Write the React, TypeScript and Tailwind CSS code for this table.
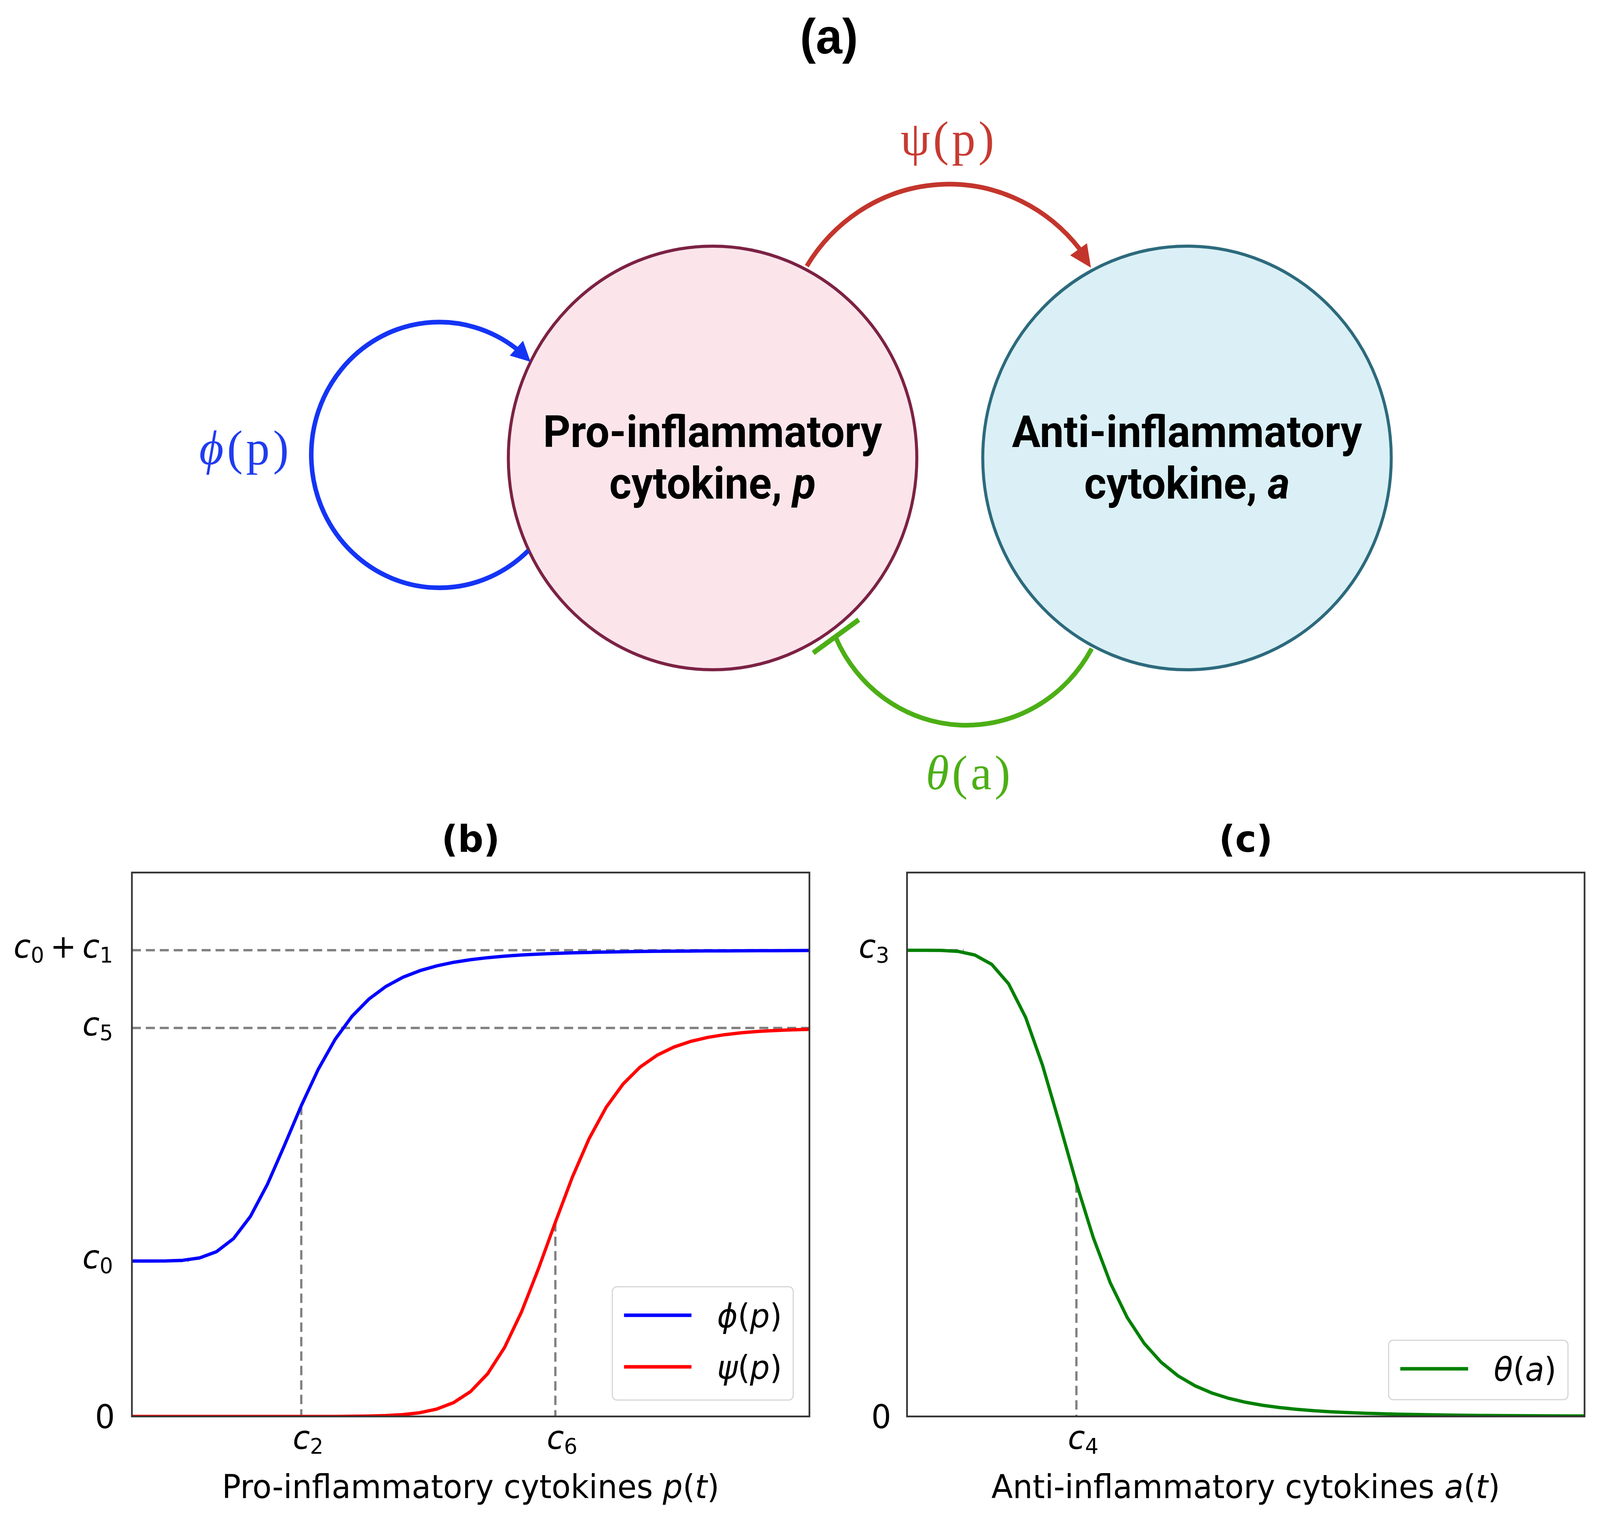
import React, { useEffect, useState } from "react";

const W = 1798;
const H = 1392;
const TOP = 38;
const BOT = TOP + H;
const yv = (v: number) => BOT - (v * H) / 3.5;
const xv = (x0: number, p: number) => x0 + (p * W) / 8;

const phi = (p: number) => 1 + (2 * Math.pow(p, 5)) / (32 + Math.pow(p, 5));
const psi = (p: number) => (2.5 * Math.pow(p, 12)) / (Math.pow(5, 12) + Math.pow(p, 12));
const theta = (a: number) => (3 * 32) / (32 + Math.pow(a, 5));

const pts = (f: (x: number) => number, x0: number) =>
  Array.from({ length: 41 }, (_, i) => {
    const p = i * 0.2;
    return `${xv(x0, p).toFixed(1)},${yv(f(p)).toFixed(1)}`;
  }).join(" ");

const DASH = "24 13";
const GRAY = "#808080";
const FS = 83;

function Sub({ c, n }: { c: string; n: string }) {
  return (
    <>
      <tspan fontStyle="italic">{c}</tspan>
      <tspan fontSize={56} dy={12}>
        {n}
      </tspan>
    </>
  );
}

function LeftChart() {
  const x0 = 350;
  const x1 = x0 + W;
  return (
    <svg width={2200} height={1569} className="block">
      <defs>
        <clipPath id="clipL">
          <rect x={x0} y={TOP} width={W} height={H} />
        </clipPath>
      </defs>
      <g clipPath="url(#clipL)">
        <line x1={x0} x2={x1} y1={yv(3)} y2={yv(3)} stroke={GRAY} strokeWidth={6} strokeDasharray={DASH} />
        <line x1={x0} x2={x1} y1={yv(2.5)} y2={yv(2.5)} stroke={GRAY} strokeWidth={6} strokeDasharray={DASH} />
        <line x1={x0} x2={x0 + 150} y1={yv(1)} y2={yv(1)} stroke={GRAY} strokeWidth={6} strokeDasharray={DASH} />
        <line x1={xv(x0, 2)} x2={xv(x0, 2)} y1={yv(2)} y2={BOT} stroke={GRAY} strokeWidth={6} strokeDasharray={DASH} />
        <line x1={xv(x0, 5)} x2={xv(x0, 5)} y1={yv(1.25)} y2={BOT} stroke={GRAY} strokeWidth={6} strokeDasharray={DASH} />
        <polyline points={pts(phi, x0)} fill="none" stroke="#0000ff" strokeWidth={8.5} strokeLinejoin="round" />
        <polyline points={pts(psi, x0)} fill="none" stroke="#ff0000" strokeWidth={8.5} strokeLinejoin="round" />
      </g>
      <rect x={x0} y={TOP} width={W} height={H} fill="none" stroke="#333333" strokeWidth={4.5} />

      <g fontFamily="DejaVu Sans, sans-serif" fontSize={FS} fill="#000">
        <text x={300} y={yv(3) + 19} textAnchor="end">
          <Sub c="c" n="0" />
          <tspan dx={16} dy={-12}>+</tspan>
          <tspan dx={16} fontStyle="italic">c</tspan>
          <tspan fontSize={56} dy={12}>1</tspan>
        </text>
        <text x={300} y={yv(2.5) + 19} textAnchor="end">
          <Sub c="c" n="5" />
        </text>
        <text x={300} y={yv(1) + 19} textAnchor="end">
          <Sub c="c" n="0" />
        </text>
        <text x={305} y={BOT + 30} textAnchor="end">0</text>
        <text x={xv(x0, 2) + 18} y={1513} textAnchor="middle">
          <Sub c="c" n="2" />
        </text>
        <text x={xv(x0, 5) + 18} y={1513} textAnchor="middle">
          <Sub c="c" n="6" />
        </text>
      </g>

      <rect x={1625} y={1098} width={480} height={290} rx={12} fill="#ffffff" fillOpacity={0.85} stroke="#d6d6d6" strokeWidth={3} />
      <line x1={1656} x2={1835} y1={1171} y2={1171} stroke="#0000ff" strokeWidth={9} />
      <line x1={1656} x2={1835} y1={1303} y2={1303} stroke="#ff0000" strokeWidth={9} />
      <g fontFamily="DejaVu Sans, sans-serif" fontSize={FS} fill="#000">
        <text x={1903} y={1202}>
          <tspan fontStyle="italic">ϕ</tspan>(<tspan fontStyle="italic">p</tspan>)
        </text>
        <text x={1903} y={1334}>
          <tspan fontStyle="italic">ψ</tspan>(<tspan fontStyle="italic">p</tspan>)
        </text>
      </g>
    </svg>
  );
}

function RightChart() {
  const x0 = 207;
  return (
    <svg width={2046} height={1569} className="block">
      <defs>
        <clipPath id="clipR">
          <rect x={x0} y={TOP} width={W} height={H} />
        </clipPath>
      </defs>
      <g clipPath="url(#clipR)">
        <line x1={x0} x2={x0 + 150} y1={yv(3)} y2={yv(3)} stroke={GRAY} strokeWidth={6} strokeDasharray={DASH} />
        <line x1={xv(x0, 2)} x2={xv(x0, 2)} y1={yv(1.5)} y2={BOT} stroke={GRAY} strokeWidth={6} strokeDasharray={DASH} />
        <polyline points={pts(theta, x0)} fill="none" stroke="#008000" strokeWidth={8.5} strokeLinejoin="round" />
      </g>
      <rect x={x0} y={TOP} width={W} height={H} fill="none" stroke="#333333" strokeWidth={4.5} />

      <g fontFamily="DejaVu Sans, sans-serif" fontSize={FS} fill="#000">
        <text x={160} y={yv(3) + 19} textAnchor="end">
          <Sub c="c" n="3" />
        </text>
        <text x={165} y={BOT + 30} textAnchor="end">0</text>
        <text x={xv(x0, 2) + 18} y={1513} textAnchor="middle">
          <Sub c="c" n="4" />
        </text>
      </g>

      <rect x={1485} y={1235} width={476} height={152} rx={12} fill="#ffffff" fillOpacity={0.85} stroke="#d6d6d6" strokeWidth={3} />
      <line x1={1516} x2={1696} y1={1308} y2={1308} stroke="#008000" strokeWidth={9} />
      <g fontFamily="DejaVu Sans, sans-serif" fontSize={FS} fill="#000">
        <text x={1764} y={1339}>
          <tspan fontStyle="italic">θ</tspan>(<tspan fontStyle="italic">a</tspan>)
        </text>
      </g>
    </svg>
  );
}

function Diagram() {
  return (
    <div className="relative h-[2080px] shrink-0">
      <div className="pt-[31px] pl-[154px] text-center text-[126px] leading-none font-bold font-['Liberation_Sans',Arial,sans-serif] text-black">
        (a)
      </div>

      <div className="absolute left-[1345px] top-[626px] w-[1092px] h-[1092px] rounded-full border-[8px] border-[#7c2244] bg-[#fbe5eb] flex items-center justify-center text-center font-['Roboto',sans-serif] font-bold text-[113px] leading-[132px] text-black">
        <div>
          Pro-inflammatory
          <br />
          cytokine, <span className="italic">p</span>
        </div>
      </div>
      <div className="absolute left-[2604px] top-[626px] w-[1092px] h-[1092px] rounded-full border-[8px] border-[#2d6a7d] bg-[#daf0f6] flex items-center justify-center text-center font-['Roboto',sans-serif] font-bold text-[113px] leading-[132px] text-black">
        <div>
          Anti-inflammatory
          <br />
          cytokine, <span className="italic">a</span>
        </div>
      </div>

      <svg className="absolute inset-0" width={4246} height={2080}>
        <path d="M 1402 1409 A 340 340 0 1 1 1371 893" fill="none" stroke="#1434f5" strokeWidth={12} />
        <polygon points="1408,926 1352.8,910 1388.2,872" fill="#1434f5" />
        <path d="M 2141 681 A 445 445 0 0 1 2865 637" fill="none" stroke="#c3352c" strokeWidth={12} />
        <polygon points="2895,685 2840,653.5 2884.5,622.5" fill="#c3352c" />
        <path d="M 2897 1660 A 380 380 0 0 1 2218 1632" fill="none" stroke="#4caf16" strokeWidth={12} />
        <line x1={2158} y1={1671} x2={2279} y2={1586} stroke="#4caf16" strokeWidth={13} />
      </svg>

      <div className="absolute left-[2518px] top-[293px] -translate-x-1/2 whitespace-nowrap text-[125px] leading-none tracking-[8px] font-['Liberation_Serif','DejaVu_Serif',serif] text-[#c73a31]">
        ψ(p)
      </div>
      <div className="absolute left-[652px] top-[1084px] -translate-x-1/2 whitespace-nowrap text-[125px] leading-none tracking-[9px] font-['Liberation_Serif','DejaVu_Serif',serif] text-[#1f3cf0]">
        <span className="italic">ϕ</span>(p)
      </div>
      <div className="absolute left-[2573px] top-[1916px] -translate-x-1/2 whitespace-nowrap text-[125px] leading-none tracking-[8px] font-['Liberation_Serif','DejaVu_Serif',serif] text-[#4caf16]">
        <span className="italic">θ</span>(a)
      </div>
    </div>
  );
}

function useFit() {
  const get = () =>
    typeof window === "undefined"
      ? { x: 1, y: 1 }
      : { x: window.innerWidth / 4246, y: window.innerHeight / 3890 };
  const [k, setK] = useState(get);
  useEffect(() => {
    const f = () => setK(get());
    f();
    window.addEventListener("resize", f);
    return () => window.removeEventListener("resize", f);
  }, []);
  return k;
}

export default function App() {
  const k = useFit();
  return (
    <div className="w-screen h-screen overflow-hidden bg-white">
      <div
        className="w-[4246px] h-[3890px] bg-white flex flex-col origin-top-left"
        style={{ transform: `scale(${k.x}, ${k.y})` }}
      >
        <Diagram />
        <div className="flex">
          <div className="w-[2200px] flex flex-col">
            <div className="ml-[350px] w-[1798px] pt-[20px] text-center text-[95px] leading-none font-bold font-['DejaVu_Sans',sans-serif] text-black">
              (b)
            </div>
            <LeftChart />
            <div className="ml-[350px] w-[1798px] text-center text-[83px] leading-none font-['DejaVu_Sans',sans-serif] text-black whitespace-nowrap">
              Pro-inflammatory cytokines <span className="italic">p</span>(<span className="italic">t</span>)
            </div>
          </div>
          <div className="w-[2046px] flex flex-col">
            <div className="ml-[207px] w-[1798px] pt-[20px] text-center text-[95px] leading-none font-bold font-['DejaVu_Sans',sans-serif] text-black">
              (c)
            </div>
            <RightChart />
            <div className="ml-[207px] w-[1798px] text-center text-[83px] leading-none font-['DejaVu_Sans',sans-serif] text-black whitespace-nowrap">
              Anti-inflammatory cytokines <span className="italic">a</span>(<span className="italic">t</span>)
            </div>
          </div>
        </div>
      </div>
    </div>
  );
}
